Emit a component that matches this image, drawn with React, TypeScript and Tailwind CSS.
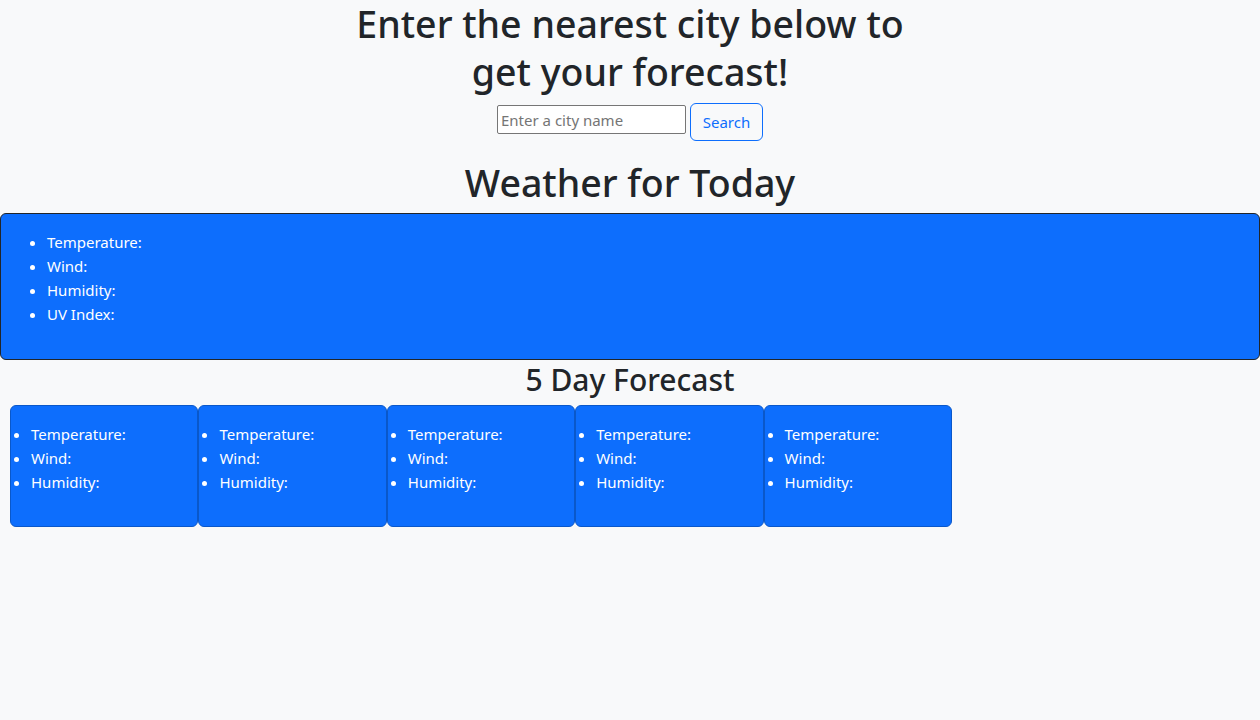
import React from "react";

const days = [0, 1, 2, 3, 4];

export default function App() {
  return (
    <div
      className="min-h-[720px] w-full bg-[#f8f9fa] text-[#212529]"
      style={{ fontFamily: '"Noto Sans", "Open Sans", sans-serif' }}
    >
      <h1 className="mx-auto w-[600px] text-center text-[37.5px] font-medium leading-[48px]">
        Enter the nearest city below to get your forecast!
      </h1>
      <div className="mt-[7px] flex items-start justify-center">
        <input
          className="mt-[2px] h-[29px] w-[189px] rounded-[2px] border border-[#767676] bg-white px-[3px] text-[15px] text-[#212529] placeholder:text-[#757575] outline-none"
          placeholder="Enter a city name"
        />
        <button className="ml-[4px] h-[38px] w-[73px] rounded-[6px] border border-[#0d6efd] text-[15px] text-[#0d6efd]">
          Search
        </button>
      </div>
      <h1 className="mt-[18px] text-center text-[37.5px] font-medium leading-[48px]">
        Weather for Today
      </h1>
      <div className="mt-[6px] h-[147px] rounded-[6px] border border-[#212529] bg-[#0d6efd] p-[16px] text-white">
        <ul className="list-disc pl-[30px] text-[15px] leading-[24px]">
          <li>Temperature:</li>
          <li>Wind:</li>
          <li>Humidity:</li>
          <li>UV Index:</li>
        </ul>
      </div>
      <h2 className="mt-[1px] text-center text-[30px] font-medium leading-[38px]">
        5 Day Forecast
      </h2>
      <div className="ml-[10px] mt-[6px] flex">
        {days.map((d) => (
          <div
            key={d}
            className="h-[122px] w-[188.4px] shrink-0 rounded-[6px] border border-[#0a58ca] bg-[#0d6efd] py-[16px] text-white"
          >
            <ul className="list-disc pl-[20px] text-[15px] leading-[24px]">
              <li>Temperature:</li>
              <li>Wind:</li>
              <li>Humidity:</li>
            </ul>
          </div>
        ))}
      </div>
    </div>
  );
}
